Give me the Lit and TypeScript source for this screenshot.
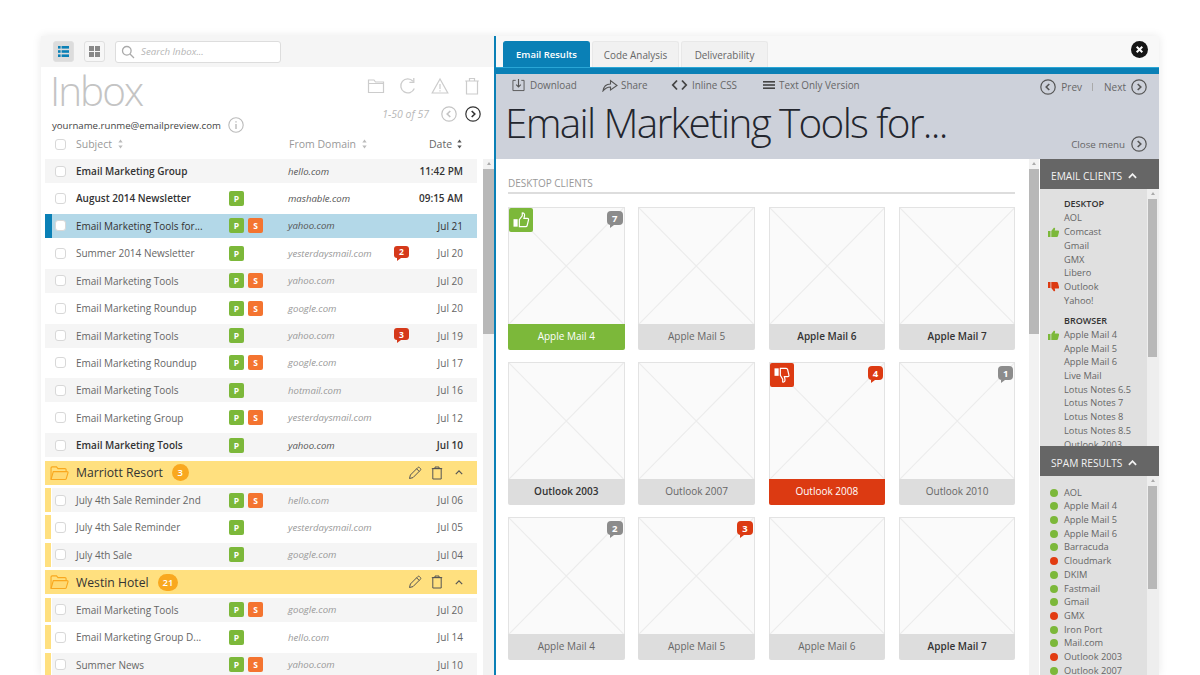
import { LitElement, html, css } from "lit";
import { customElement } from "lit/decorators.js";

type Row = { s: string; b?: boolean; sel?: boolean; badge: string; d: string; c?: number; date: string; g?: boolean };
type Item = Row | { group: string; n: number };

const items: Item[] = [
  { s: "Email Marketing Group", b: true, badge: "", d: "hello.com", date: "11:42 PM" },
  { s: "August 2014 Newsletter", b: true, badge: "P", d: "mashable.com", date: "09:15 AM" },
  { s: "Email Marketing Tools for...", sel: true, badge: "PS", d: "yahoo.com", date: "Jul 21" },
  { s: "Summer 2014 Newsletter", badge: "P", d: "yesterdaysmail.com", c: 2, date: "Jul 20" },
  { s: "Email Marketing Tools", badge: "PS", d: "yahoo.com", date: "Jul 20" },
  { s: "Email Marketing Roundup", badge: "PS", d: "google.com", date: "Jul 20" },
  { s: "Email Marketing Tools", badge: "P", d: "yahoo.com", c: 3, date: "Jul 19" },
  { s: "Email Marketing Roundup", badge: "PS", d: "google.com", date: "Jul 17" },
  { s: "Email Marketing Tools", badge: "P", d: "hotmail.com", date: "Jul 16" },
  { s: "Email Marketing Group", badge: "PS", d: "yesterdaysmail.com", date: "Jul 12" },
  { s: "Email Marketing Tools", b: true, badge: "P", d: "yahoo.com", date: "Jul 10" },
  { group: "Marriott Resort", n: 3 },
  { s: "July 4th Sale Reminder 2nd", g: true, badge: "PS", d: "hello.com", date: "Jul 06" },
  { s: "July 4th Sale Reminder", g: true, badge: "P", d: "yesterdaysmail.com", date: "Jul 05" },
  { s: "July 4th Sale", g: true, badge: "P", d: "google.com", date: "Jul 04" },
  { group: "Westin Hotel", n: 21 },
  { s: "Email Marketing Tools", g: true, badge: "PS", d: "google.com", date: "Jul 20" },
  { s: "Email Marketing Group D...", g: true, badge: "P", d: "hello.com", date: "Jul 14" },
  { s: "Summer News", g: true, badge: "PS", d: "yahoo.com", date: "Jul 10" },
];

type Card = { t: string; b?: boolean; st?: "good" | "bad"; c?: number; cr?: boolean };
const cards: Card[] = [
  { t: "Apple Mail 4", st: "good", c: 7 },
  { t: "Apple Mail 5" },
  { t: "Apple Mail 6", b: true },
  { t: "Apple Mail 7", b: true },
  { t: "Outlook 2003", b: true },
  { t: "Outlook 2007" },
  { t: "Outlook 2008", st: "bad", c: 4, cr: true },
  { t: "Outlook 2010", c: 1 },
  { t: "Apple Mail 4", c: 2 },
  { t: "Apple Mail 5", c: 3, cr: true },
  { t: "Apple Mail 6" },
  { t: "Apple Mail 7", b: true },
];

const clients: [string, string][] = [
  ["DESKTOP", "h"], ["AOL", ""], ["Comcast", "u"], ["Gmail", ""], ["GMX", ""], ["Libero", ""], ["Outlook", "d"], ["Yahoo!", ""],
  ["BROWSER", "H"], ["Apple Mail 4", "u"], ["Apple Mail 5", ""], ["Apple Mail 6", ""], ["Live Mail", ""],
  ["Lotus Notes 6.5", ""], ["Lotus Notes 7", ""], ["Lotus Notes 8", ""], ["Lotus Notes 8.5", ""], ["Outlook 2003", ""],
];
const spam: [string, boolean][] = [
  ["AOL", true], ["Apple Mail 4", true], ["Apple Mail 5", true], ["Apple Mail 6", true], ["Barracuda", true],
  ["Cloudmark", false], ["DKIM", true], ["Fastmail", true], ["Gmail", true], ["GMX", false], ["Iron Port", true],
  ["Mail.com", true], ["Outlook 2003", false], ["Outlook 2007", true],
];

const circ = (dir: "l" | "r", cls = "") => html`<svg class="circ ${cls}" viewBox="0 0 16 16" fill="none" stroke="currentColor"><circle cx="8" cy="8" r="7.2" stroke-width="1.2"/><path d="${dir === "l" ? "M9.3 5 6.2 8l3.1 3" : "M6.7 5l3.1 3-3.1 3"}" stroke-width="1.6"/></svg>`;
const thumbUp = html`<svg viewBox="0 0 24 24" fill="none" stroke="#fff" stroke-width="1.4"><rect x="3" y="11" width="5" height="9" fill="#fff" stroke="none"/><path d="M10 11.5 13.5 7V3.6c1.6-.4 2.8.8 2.8 2.4 0 1.4-.5 2.8-.8 4h4.2c1.2 0 1.6 1 1.3 2l-1.6 6.6c-.2.8-.8 1.4-1.7 1.4H10z"/></svg>`;
const thumbDown = html`<svg viewBox="0 0 24 24" fill="none" stroke="#fff" stroke-width="1.4"><rect x="3" y="4" width="5" height="9" fill="#fff" stroke="none"/><path d="M10 4h7c.9 0 1.5.6 1.7 1.4l1.6 6.6c.3 1-.1 2-1.3 2h-4.2c.3 1.2.8 2.6.8 4 0 1.6-1.2 2.8-2.8 2.4V17L10 12.5z"/></svg>`;
const folder = (c: string) => html`<svg class="gfolder" viewBox="0 0 20 17" fill="none" stroke="${c}" stroke-width="1.2"><path d="M1 15V3.2C1 2.4 1.5 2 2.2 2h4.6l1.6 1.8h7.4c.7 0 1.2.4 1.2 1.1V7"/><path d="M1 15.4 3.4 7h14.5c.8 0 1.4.6 1.1 1.4l-1.8 6c-.2.7-.7 1-1.4 1z" fill="#ffd166" fill-opacity=".5"/></svg>`;
const pencil = html`<svg class="gi" viewBox="0 0 14 14" fill="none" stroke="#555" stroke-width="1"><path d="M1.5 12.5 2.4 9 9.8 1.6c.5-.5 1.2-.5 1.7 0l.9.9c.5.5.5 1.2 0 1.7L5 11.6zM8.6 2.8l2.6 2.6"/></svg>`;
const trash = html`<svg class="gi" viewBox="0 0 14 14" fill="none" stroke="#555" stroke-width="1"><path d="M2.8 2.6h8.4v10.4H2.8zM1.8 2.6h10.4M5 2.6V1h4v1.6"/></svg>`;
const chevUp = (c = "#555", w = "1.500") => html`<svg class="chev" viewBox="0 0 10 6" fill="none" stroke="${c}" stroke-width="${w}"><path d="M1 5l4-4 4 4"/></svg>`;
const sortI = (dark = false) => html`<svg class="sort" viewBox="0 0 6 11" fill="${dark ? "#555" : "#bbb"}"><path d="M3 0l2.6 3.600H.4z"/><path d="M3 11 .4 7.400h5.200z"/></svg>`;

@customElement("app-root")
export class AppRoot extends LitElement {
  static styles = css`
    :host { display: block; width: 1200px; height: 675px; overflow: hidden; background: #fff; font-family: "Open Sans", "Liberation Sans", sans-serif; color: #666; }
    .app { display: flex; width: 1118px; height: 639px; margin: 36px 0 0 41px; box-shadow: 0 0 9px rgba(0,0,0,.09); background: #fff; }
    svg { display: block; flex: none; }

    .left { width: 453px; flex: none; display: flex; flex-direction: column; border-right: 2px solid #0a80b6; }
    .topbar { height: 31px; flex: none; background: #f5f5f5; display: flex; align-items: center; padding-left: 12px; box-sizing: border-box; }
    .vbtn { width: 21px; height: 21px; box-sizing: border-box; border-radius: 3px; border: 1px solid #e0e0e0; display: flex; align-items: center; justify-content: center; margin-right: 10px; background: #f7f7f7; }
    .vbtn.on { background: #dcdcdc; }
    .vbtn svg { width: 11px; height: 11px; }
    .search { width: 166px; height: 22px; box-sizing: border-box; border: 1px solid #ddd; border-radius: 3px; background: #fff; display: flex; align-items: center; padding-left: 5px; gap: 6px; font-size: 9.7px; font-style: italic; color: #b5b5b5; }
    .search svg { width: 14px; height: 14px; }

    .head { height: 92px; flex: none; display: flex; justify-content: space-between; padding: 0 13px 0 10px; position: relative; }
    .hl { display: flex; flex-direction: column; }
    .inbox { font-size: 40.5px; font-weight: 300; color: #c4c4c4; line-height: 47px; letter-spacing: -2px; height: 48px; margin-left: -1px; }
    .addr { display: flex; align-items: center; gap: 7px; font-size: 9.65px; color: #444; margin: 2px 0 0 1px; height: 16px; }
    .addr svg { width: 16px; height: 16px; color: #bbb; }
    .colh { display: flex; align-items: center; font-size: 10.5px; color: #999; position: absolute; left: 0; right: 0; bottom: 6px; height: 18px; }
    .colh .cb { margin-left: 14px; margin-right: 10px; }
    .colh .sub { width: 213px; display: flex; gap: 6px; align-items: center; }
    .colh .fd { width: 140px; display: flex; gap: 6px; align-items: center; }
    .colh .dat { width: 43px; display: flex; gap: 5px; align-items: center; color: #666; }
    .sort { width: 5px; height: 10px; }
    .hr { display: flex; flex-direction: column; align-items: flex-end; }
    .acts { display: flex; gap: 14px; margin-top: 9px; color: #ccc; align-items: center; height: 20px; }
    .acts svg { height: 18px; width: 18px; }
    .pag { display: flex; align-items: center; margin-top: 10px; font-size: 10.5px; font-style: italic; color: #b8b8b8; }
    .pag span { margin-right: 12px; }
    .circ { width: 16px; height: 16px; }
    .pag .circ { color: #c4c4c4; margin-right: 8px; }
    .pag .circ.dk { color: #333; margin-right: 0; }

    .body { display: flex; flex: 1; min-height: 0; }
    .list { width: 432px; margin-left: 4px; display: flex; flex-direction: column; gap: 3.43px; flex: none; }
    .row { height: 24px; flex: none; display: grid; grid-template-columns: 7px 14px 163px 59px 106px 15px 54px; align-items: center; font-size: 10px; color: #666; }
    .row.alt { background: #f5f5f5; }
    .row.b { color: #333; font-weight: 600; }
    .row.sel { background: #b3d8e8; color: #333; }
    .strip { height: 24px; box-sizing: border-box; }
    .row.sel .strip { background: #0a80b6; }
    .row.g .strip { background: #ffe07f; border-right: 1px solid #fff; }
    .cb { width: 11px; height: 11px; box-sizing: border-box; border: 1px solid #d8d8d8; border-radius: 3px; background: #fff; margin-left: 3px; }
    .subj { padding-left: 10px; white-space: nowrap; }
    .badges { display: flex; gap: 4px; }
    .bd { width: 15px; height: 15px; border-radius: 2px; color: #fff; font-size: 8.5px; font-weight: 700; display: flex; align-items: center; justify-content: center; }
    .bd.p { background: #7cb83a; }
    .bd.s { background: #f47430; }
    .dom { font-style: italic; color: #999; font-size: 9.6px; white-space: nowrap; }
    .row.b .dom, .row.sel .dom { color: #555; font-weight: 400; }
    .date { text-align: right; }
    .bub { position: relative; width: 15px; height: 12px; border-radius: 3px; background: #d5391a; color: #fff; font-size: 8.5px; font-weight: 700; display: flex; align-items: center; justify-content: center; margin-top: -3px; }
    .bub::after { content: ""; position: absolute; left: 3px; bottom: -3px; border-left: 4px solid #d5391a; border-bottom: 3px solid transparent; }

    .group { height: 24px; flex: none; background: #ffe07f; display: flex; align-items: center; padding-left: 5px; font-size: 12.2px; color: #333; }
    .gfolder { width: 19px; height: 16px; margin-right: 7px; }
    .cnt { margin-left: 9px; height: 17px; min-width: 17px; padding: 0 5px; box-sizing: border-box; border-radius: 9px; background: #f9a81f; color: #fff; font-size: 9.5px; font-weight: 600; display: flex; align-items: center; justify-content: center; }
    .gact { margin-left: auto; display: flex; align-items: center; gap: 8px; padding-right: 14px; }
    .gi { width: 14px; height: 14px; }
    .chev { width: 8px; height: 5px; }
    .gact .chev { margin-left: 3px; }

    .sb { background: #f2f2f2; display: flex; flex-direction: column; align-items: center; flex: none; width: 10px; box-sizing: border-box; }
    .sb .up { width: 0; height: 0; border-left: 2.5px solid transparent; border-right: 2.5px solid transparent; border-bottom: 3px solid #aaa; margin: 3px 0 4px; }
    .sb .th { width: 100%; background: #b8b8b8; }
    .sb.main .th { height: 165px; }
    .left .sb { margin-left: 6px; width: 11px; }

    .right { flex: 1; min-width: 0; display: flex; flex-direction: column; }
    .tabs { height: 31px; flex: none; background: #f8f8f8; display: flex; align-items: flex-end; padding-left: 7px; gap: 2px; position: relative; }
    .tab { width: 87px; height: 26px; box-sizing: border-box; background: #f1f1f1; border: 1px solid #e8e8e8; border-bottom: none; border-radius: 3px 3px 0 0; font-size: 9.9px; color: #666; display: flex; align-items: center; justify-content: center; }
    .tab.on { background: #0a80b6; border-color: #0a80b6; color: #fff; font-weight: 600; font-size: 9.5px; }
    .close { position: absolute; right: 11px; top: 5px; width: 17px; height: 17px; }
    .bluebar { height: 7px; flex: none; background: #0a80b6; border-top: 1px solid #2aa6d6; box-sizing: border-box; }
    .tools { height: 85px; flex: none; background: #cdd1da; box-sizing: border-box; position: relative; padding: 0 12px 0 10px; color: #666; font-size: 9.9px; }
    .tl { display: flex; height: 22px; align-items: center; margin-left: 6px; }
    .ti { display: flex; align-items: center; gap: 5px; }
    .ti svg { height: 14px; }
    .ti.dl { width: 90px; } .ti.shr { width: 69px; gap: 3px; } .ti.ic { width: 92px; gap: 4px; } .ti.tx { gap: 4px; }
    .nav { margin-left: auto; margin-top: 3px; display: flex; align-items: center; color: #666; font-size: 10px; }
    .nav .sep { width: 1px; height: 8px; background: #aaa; margin: 0 11px 0 10px; }
    .nav .a { margin-left: 5px; } .nav .z { margin-right: 5px; }
    .nav .circ, .cm .circ { color: #555; }
    .ttl { font-size: 40.5px; font-weight: 300; color: #23262e; line-height: 50px; letter-spacing: -1.67px; margin: 2px 0 0 -1px; height: 50px; white-space: nowrap; }
    .cm { position: absolute; right: 12px; bottom: 7px; display: flex; align-items: center; gap: 6px; font-size: 9.8px; }

    .lower { flex: 1; min-height: 0; display: flex; }
    .gal { width: 533px; flex: none; box-sizing: border-box; padding: 0 14px 0 12px; }
    .gh { height: 35px; box-sizing: border-box; border-bottom: 2px solid #ddd; font-size: 10px; color: #999; padding-top: 18px; line-height: 13px; margin-bottom: 13px; width: 507px; }
    .grid { display: grid; grid-template-columns: repeat(4, 116.5px); column-gap: 13.8px; row-gap: 12px; }
    .card { height: 143px; position: relative; display: flex; flex-direction: column; }
    .ph { height: 117px; box-sizing: border-box; border: 1px solid #e3e3e3; border-bottom: none; background: #fafafa; }
    .ph svg { width: 100%; height: 100%; }
    .cap { height: 26px; box-sizing: border-box; padding-bottom: 1.5px; background: #ddd; border-radius: 0 0 2px 2px; font-size: 10px; display: flex; align-items: center; justify-content: center; color: #666; }
    .cap.b { font-weight: 600; color: #333; }
    .cap.good { background: #7cb83a; color: #fff; }
    .cap.bad { background: #dc3a12; color: #fff; }
    .st { position: absolute; left: 1px; top: 1px; width: 24px; height: 24px; border-radius: 2px; display: flex; align-items: center; justify-content: center; }
    .st.good { background: #7cb83a; } .st.bad { background: #dc3a12; }
    .st svg { width: 20px; height: 20px; }
    .bub.card-b { position: absolute; right: 2px; top: 4px; margin: 0; width: 15.5px; height: 14px; border-radius: 4px; background: #8c8c8c; font-size: 9.5px; }
    .bub.card-b::after { border-left-color: #8c8c8c; }
    .bub.card-b.r { background: #dc3a12; }
    .bub.card-b.r::after { border-left-color: #dc3a12; }

    .lower .sb.main { margin-right: 1px; }
    .side { width: 119px; flex: none; display: flex; flex-direction: column; min-height: 0; }
    .sh { height: 30px; flex: none; background: #666; color: #f2f2f2; font-size: 10.2px; display: flex; align-items: center; padding: 3px 0 0 11px; gap: 6px; box-sizing: border-box; }
    .sh .chev { width: 9px; height: 6px; }
    .sec { display: flex; background: #eee; min-height: 0; }
    .sec.a { height: 257px; } .sec.z { flex: 1; }
    .inner { width: 107px; flex: none; background: #e0e0e0; overflow: hidden; box-sizing: border-box; font-size: 9.25px; color: #666; }
    .sec.a .inner { padding-top: 8px; } .sec.z .inner { padding-top: 9.5px; }
    .it { height: 13.72px; line-height: 13.72px; display: flex; align-items: center; white-space: nowrap; padding-left: 24px; position: relative; }
    .it.h { color: #333; font-weight: 600; font-size: 9px; height: 14.4px; }
    .it.H { margin-top: 6px; }
    .it svg { position: absolute; left: 8px; top: 2px; width: 11px; height: 10px; }
    .dot { position: absolute; left: 10px; top: 3px; width: 8px; height: 8px; border-radius: 50%; background: #7cb83a; }
    .dot.r { background: #e23c12; }
    .sec .sb { width: 11px; flex: none; background: #eee; margin-right: 1px; }
    .sec.a .sb .th { height: 158px; width: 9px; }
    .sec.z .sb .th { height: 103px; width: 9px; }
  `;

  row(r: Row, alt: boolean) {
    const cl = ["row", alt ? "alt" : "", r.b ? "b" : "", r.sel ? "sel" : "", r.g ? "g" : ""].join(" ");
    return html`<div class="${cl}">
      <span class="strip"></span><span class="cb"></span>
      <span class="subj">${r.s}</span>
      <span class="badges">${r.badge.includes("P") ? html`<span class="bd p">P</span>` : ""}${r.badge.includes("S") ? html`<span class="bd s">S</span>` : ""}</span>
      <span class="dom">${r.d}</span>
      ${r.c ? html`<span class="bub">${r.c}</span>` : html`<span></span>`}
      <span class="date">${r.date}</span>
    </div>`;
  }

  render() {
    let idx = 0;
    return html`<div class="app">
      <section class="left">
        <div class="topbar">
          <div class="vbtn on"><svg viewBox="0 0 11 11" fill="#0a80b6"><rect y="0" width="2.6" height="2.6"/><rect x="3.6" y="0" width="7.4" height="2.6"/><rect y="4.2" width="2.6" height="2.6"/><rect x="3.6" y="4.2" width="7.4" height="2.6"/><rect y="8.4" width="2.6" height="2.6"/><rect x="3.6" y="8.4" width="7.4" height="2.6"/></svg></div>
          <div class="vbtn"><svg viewBox="0 0 11 11" fill="#888"><rect width="5" height="5"/><rect x="6" width="5" height="5"/><rect y="6" width="5" height="5"/><rect x="6" y="6" width="5" height="5"/></svg></div>
          <div class="search"><svg viewBox="0 0 14 14" fill="none" stroke="#aaa" stroke-width="1.3"><circle cx="5.8" cy="5.8" r="4.3"/><path d="M9 9l4 4"/></svg>Search Inbox...</div>
        </div>
        <div class="head">
          <div class="hl">
            <div class="inbox">Inbox</div>
            <div class="addr">yourname.runme@emailpreview.com<svg viewBox="0 0 16 16" fill="none" stroke="currentColor"><circle cx="8" cy="8" r="7.2" stroke-width="1.1"/><path d="M8 7v5" stroke-width="1.4"/><path d="M8 4.2v1.4" stroke-width="1.4"/></svg></div>
          </div>
          <div class="hr">
            <div class="acts">
              <svg viewBox="0 0 18 18" fill="none" stroke="currentColor" stroke-width="1.2"><path d="M1.5 15.500V3h5.500l1.500 2h8v10.500zM1.500 6.500h15"/></svg>
              <svg viewBox="0 0 18 18" fill="none" stroke="currentColor" stroke-width="1.3"><path d="M15.300 11.500A7 7 0 1 1 14 4.200"/><path d="M14.800 1v4.400h-4.400"/></svg>
              <svg viewBox="0 0 18 18" fill="none" stroke="currentColor" stroke-width="1.2"><path d="M9 2 1.200 16h15.600zM9 7v5M9 13.200v1.300"/></svg>
              <svg viewBox="0 0 18 18" fill="none" stroke="currentColor" stroke-width="1.2"><path d="M3.500 4h11v13h-11zM2.200 4h13.600M6.500 4V1.500h5V4"/></svg>
            </div>
            <div class="pag"><span>1-50 of 57</span>${circ("l")}${circ("r", "dk")}</div>
          </div>
          <div class="colh"><span class="cb"></span>
            <span class="sub">Subject ${sortI()}</span>
            <span class="fd">From Domain ${sortI()}</span>
            <span class="dat">Date ${sortI(true)}</span>
          </div>
        </div>
        <div class="body">
          <div class="list">
            ${items.map((it) => {
              const i = idx++;
              if ("group" in it) {
                return html`<div class="group">${folder("#f9a81f")}<span>${it.group}</span><span class="cnt">${it.n}</span>
                  <span class="gact">${pencil}${trash}${chevUp()}</span></div>`;
              }
              return this.row(it, i % 2 === 0);
            })}
          </div>
          <div class="sb main"><span class="up"></span><span class="th"></span></div>
        </div>
      </section>
      <section class="right">
        <div class="tabs">
          <div class="tab on">Email Results</div><div class="tab">Code Analysis</div><div class="tab">Deliverability</div>
          <svg class="close" viewBox="0 0 17 17"><circle cx="8.5" cy="8.5" r="8.5" fill="#161616"/><path d="M5.700 5.700l5.600 5.600M11.300 5.700l-5.600 5.600" stroke="#fff" stroke-width="2"/></svg>
        </div>
        <div class="bluebar"></div>
        <div class="tools">
          <div class="tl">
            <div class="ti dl"><svg viewBox="0 0 14 14" width="13" fill="none" stroke="#555" stroke-width="1"><path d="M4 2H1v11h12V2h-3"/><path d="M7 .5V9M4.500 6.500 7 9l2.500-2.500" stroke-width="1.2"/></svg>Download</div>
            <div class="ti shr"><svg viewBox="0 0 16 14" width="16" fill="none" stroke="#555" stroke-width="1.1"><path d="M1 13c.6-4.500 3.600-7 7.500-7V2.500L15 7.500l-6.500 4.500V9C5.500 9 3 10.500 1 13z"/></svg>Share</div>
            <div class="ti ic"><svg viewBox="0 0 17 14" width="17" fill="none" stroke="#444" stroke-width="1.8"><path d="M6 2.500 1.800 7 6 11.500M11 2.500 15.200 7 11 11.500"/></svg>Inline CSS</div>
            <div class="ti tx"><svg viewBox="0 0 12 14" width="12" fill="#444"><rect y="3" width="12" height="1.600"/><rect y="6.200" width="12" height="1.600"/><rect y="9.400" width="12" height="1.600"/></svg>Text Only Version</div>
            <div class="nav">${circ("l")}<span class="a">Prev</span><span class="sep"></span><span class="z">Next</span>${circ("r")}</div>
          </div>
          <div class="ttl">Email Marketing Tools for...</div>
          <div class="cm">Close menu ${circ("r")}</div>
        </div>
        <div class="lower">
          <div class="gal">
            <div class="gh">DESKTOP CLIENTS</div>
            <div class="grid">
              ${cards.map((c) => html`<div class="card">
                <div class="ph"><svg viewBox="0 0 100 100" preserveAspectRatio="none" fill="none" stroke="#ececec" stroke-width="1.200"><path d="M0 0 100 100M100 0 0 100" vector-effect="non-scaling-stroke"/></svg></div>
                <div class="cap ${c.b ? "b" : ""} ${c.st ?? ""}">${c.t}</div>
                ${c.st ? html`<div class="st ${c.st}">${c.st === "good" ? thumbUp : thumbDown}</div>` : ""}
                ${c.c ? html`<div class="bub card-b ${c.cr ? "r" : ""}">${c.c}</div>` : ""}
              </div>`)}
            </div>
          </div>
          <div class="sb main"><span class="up"></span><span class="th"></span></div>
          <aside class="side">
            <div class="sh">EMAIL CLIENTS ${chevUp("#f2f2f2", "2")}</div>
            <div class="sec a">
              <div class="inner">
                ${clients.map(([t, k]) => html`<div class="it ${k === "h" || k === "H" ? "h" : ""} ${k === "H" ? "H" : ""}">
                  ${k === "u" ? html`<svg viewBox="0 0 11 10" fill="#7cb83a"><rect y="4" width="2.500" height="6"/><path d="M3.300 4 5.800 .8c.9-.4 1.500.3 1.300 1.300L6.700 3.500H10c1 0 1.200.8 1 1.500L10 9c-.2.700-.6 1-1.300 1H3.300z"/></svg>` : ""}
                  ${k === "d" ? html`<svg viewBox="0 0 11 10" fill="#dc3a12"><rect y="0" width="2.500" height="6"/><path d="M3.300 6 5.800 9.200c.9.400 1.500-.3 1.300-1.300L6.700 6.500H10c1 0 1.200-.8 1-1.500L10 1C9.800.3 9.400 0 8.700 0H3.300z"/></svg>` : ""}
                  ${t}</div>`)}
              </div>
              <div class="sb"><span class="up"></span><span class="th"></span></div>
            </div>
            <div class="sh">SPAM RESULTS ${chevUp("#f2f2f2", "2")}</div>
            <div class="sec z">
              <div class="inner">
                ${spam.map(([t, ok]) => html`<div class="it"><span class="dot ${ok ? "" : "r"}"></span>${t}</div>`)}
              </div>
              <div class="sb"><span class="up"></span><span class="th"></span></div>
            </div>
          </aside>
        </div>
      </section>
    </div>`;
  }
}
